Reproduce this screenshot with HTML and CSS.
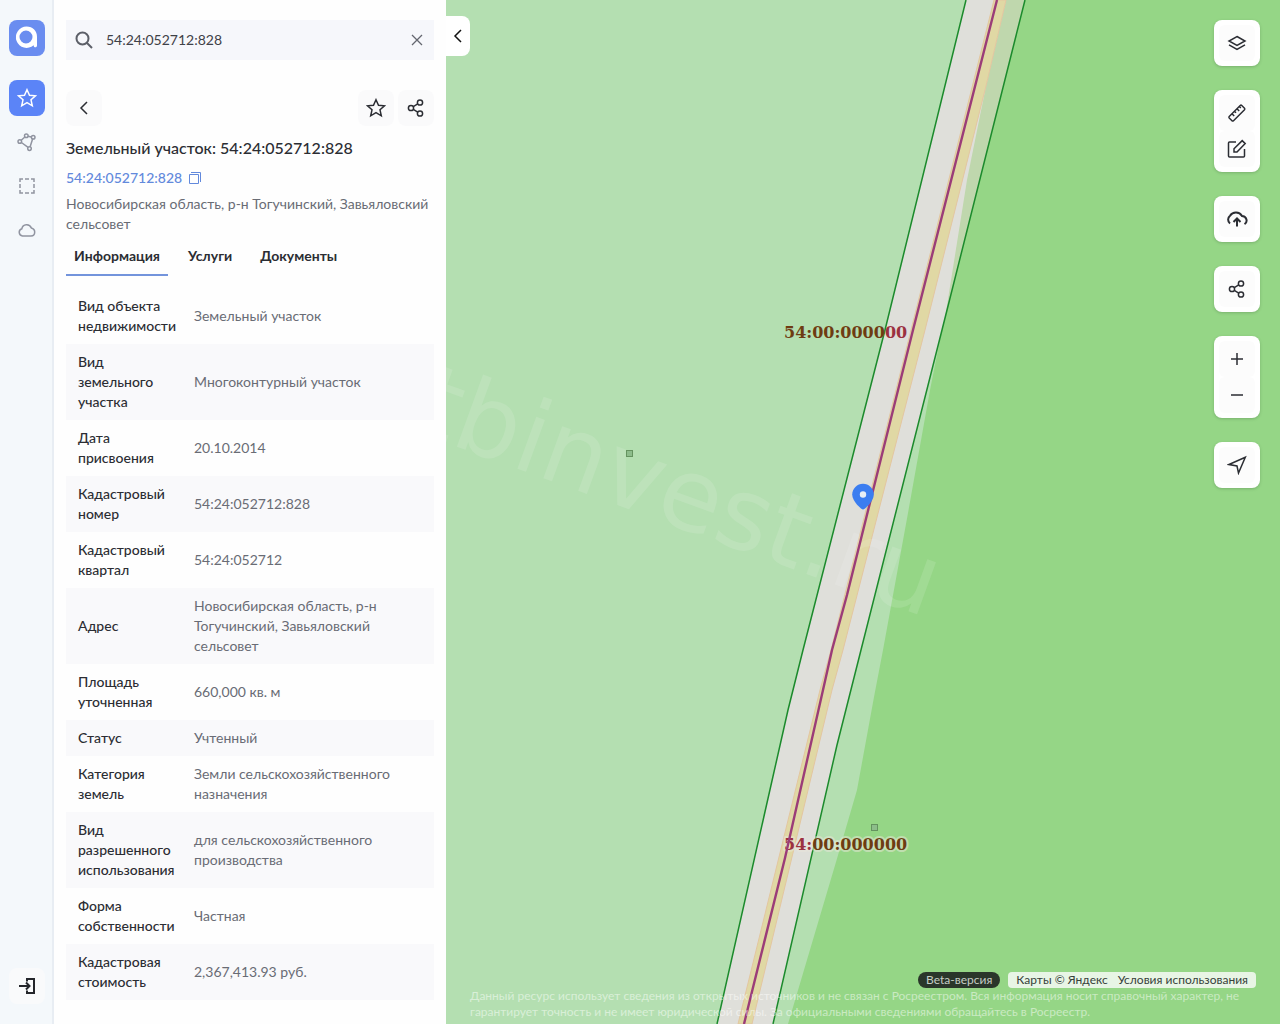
FILE: index.html
```html
<!DOCTYPE html>
<html lang="ru">
<head>
<meta charset="utf-8">
<meta name="viewport" content="width=device-width, initial-scale=1">
<title>Земельный участок: 54:24:052712:828</title>
<link rel="stylesheet" href="styles.css">
</head>
<body>
<svg class="sprite" aria-hidden="true">
  <symbol id="star" viewBox="0 0 20 20"><path d="M10 1.700l2.500 5.500 6 .6-4.500 4 1.300 6-5.300-3.100-5.300 3.100 1.300-6-4.500-4 6-.6z"/></symbol>
  <symbol id="share" viewBox="0 0 20 20"><circle cx="5" cy="10" r="2.600"/><circle cx="14" cy="4.500" r="2.600"/><circle cx="14" cy="15.500" r="2.600"/><path d="M7.300 8.600l4.400-2.700M7.300 11.400l4.400 2.700"/></symbol>
  <symbol id="back" viewBox="0 0 20 20"><path d="M13 4l-6 6 6 6"/></symbol>
</svg>
<div class="app">
  <nav class="rail" aria-label="Разделы">
    <a class="logo" href="#" aria-label="Главная"><svg width="36" height="36" viewBox="0 0 36 36"><path fill="#fff" fill-rule="evenodd" d="M17.500 6.500C24 6.500 28 11 28 16.700V25.500C28 27.500 26 27.600 25 26.700L24.600 25.300A10.700 10.700 0 1 1 17.500 6.500zM17 10.500a6.500 6.500 0 1 0 0 13 6.500 6.500 0 0 0 0-13z"/></svg></a>
    <button class="rail-btn active" aria-label="Избранное"><svg class="ico" width="20" height="20"><use href="#star"/></svg></button>
    <button class="rail-btn" aria-label="Контур"><svg class="ico" width="20" height="20" viewBox="0 0 20 20"><circle cx="2.800" cy="9.500" r="1.800"/><circle cx="9.300" cy="3.800" r="1.800"/><circle cx="16.200" cy="5.300" r="1.800"/><circle cx="12.500" cy="16.600" r="1.800"/><path d="M4.200 8.300L7.900 5M11 4.200l3.400.700M15.600 7l-2.500 7.800M4.400 10.500l6.700 4.900"/></svg></button>
    <button class="rail-btn" aria-label="Область"><svg class="ico" width="20" height="20" viewBox="0 0 20 20"><path d="M3 6V3h3M14 3h3v3M17 14v3h-3M6 17H3v-3M8 3h4M8 17h4M3 8v4M17 8v4"/></svg></button>
    <button class="rail-btn" aria-label="Облако"><svg class="ico" width="20" height="20" viewBox="0 0 20 20"><path d="M5.500 16a3.700 3.700 0 0 1-.7-7.200 5 5 0 0 1 9.500-.9c2.300.6 3.400 2.200 3.400 4.100 0 2.300-1.600 4-3.700 4z"/></svg></button>
    <button class="rail-btn login" aria-label="Войти"><svg class="ico" width="20" height="20" viewBox="0 0 20 20"><path d="M10 5.500V3h7v14h-7v-2.500M2 10h10M9 6.500l3.500 3.500L9 13.500"/></svg></button>
  </nav>

  <main class="panel">
    <form class="search">
      <svg class="ico" width="22" height="22" viewBox="0 0 22 22"><circle cx="8.500" cy="9.500" r="6"/><path d="M13 14l5 5"/></svg>
      <input type="text" aria-label="Поиск" value="54:24:052712:828">
      <button type="reset" aria-label="Очистить"><svg class="ico" width="12" height="12" viewBox="0 0 12 12"><path d="M1 1l10 10M11 1L1 11"/></svg></button>
    </form>
    <div class="actions">
      <button class="soft" aria-label="Назад"><svg class="ico" width="20" height="20"><use href="#back"/></svg></button>
      <span class="actions-right">
        <button class="soft" aria-label="В избранное"><svg class="ico" width="20" height="20"><use href="#star"/></svg></button>
        <button class="soft" aria-label="Поделиться"><svg class="ico" width="20" height="20"><use href="#share"/></svg></button>
      </span>
    </div>
    <h1>Земельный участок: 54:24:052712:828</h1>
    <a class="number" href="#">54:24:052712:828 <svg class="ico" width="14" height="14" viewBox="0 0 14 14"><path d="M1.500 3.500h9v9h-9zM3 1.500h9.500V11"/></svg></a>
    <p class="address">Новосибирская область, р-н Тогучинский, Завьяловский сельсовет</p>
    <div class="tabs" role="tablist">
      <button role="tab" aria-selected="true">Информация</button>
      <button role="tab" aria-selected="false">Услуги</button>
      <button role="tab" aria-selected="false">Документы</button>
    </div>
    <table class="info">
      <tr><th scope="row">Вид объекта недвижимости</th><td>Земельный участок</td></tr>
      <tr><th scope="row">Вид земельного участка</th><td>Многоконтурный участок</td></tr>
      <tr><th scope="row">Дата присвоения</th><td>20.10.2014</td></tr>
      <tr><th scope="row">Кадастровый номер</th><td>54:24:052712:828</td></tr>
      <tr><th scope="row">Кадастровый квартал</th><td>54:24:052712</td></tr>
      <tr><th scope="row">Адрес</th><td>Новосибирская область, р-н Тогучинский, Завьяловский сельсовет</td></tr>
      <tr><th scope="row">Площадь уточненная</th><td>660,000 кв. м</td></tr>
      <tr><th scope="row">Статус</th><td>Учтенный</td></tr>
      <tr><th scope="row">Категория земель</th><td>Земли сельскохозяйственного назначения</td></tr>
      <tr><th scope="row">Вид разрешенного использования</th><td>для сельскохозяйственного производства</td></tr>
      <tr><th scope="row">Форма собственности</th><td>Частная</td></tr>
      <tr><th scope="row">Кадастровая стоимость</th><td>2,367,413.93 руб.</td></tr>
    </table>
  </main>

  <section class="map" aria-label="Карта">
    <svg class="canvas" viewBox="446 0 834 1024" preserveAspectRatio="xMidYMid slice">
      <rect class="meadow" x="-1000" y="-500" width="3500" height="2500"/>
      <path class="forest" d="M1005 0L986 86 967 180 943 325 930 390 908 513 883 650 874 697 857 790 836 862 788 1024H2500V0z"/>
      <path class="parcel" d="M966 0L885 330 803 650 788 710 717 1024H773L837 745 861 650 942 330 1025 0z"/>
      <path class="parcel-shade" d="M1006 0L986 86 967 180 945 318 1025 0z"/>
      <path class="road" d="M994 0L911 330 831 650 820 690 738 1024H752L832 690 843 650 925 330 986 86 1006 0z"/>
      <text class="watermark" transform="translate(411 430) rotate(20)">tbinvest.ru</text>
      <path class="border" d="M966 0L885 330 803 650 788 710 717 1024M1025 0L942 330 861 650 837 745 773 1024"/>
      <rect class="pole" x="626.500" y="450.500" width="6" height="6"/>
      <rect class="pole" x="871.500" y="824.500" width="6" height="6"/>
      <text class="quarter" x="784" y="338">54:00:0000<tspan class="over">00</tspan></text>
      <text class="quarter halo" x="784" y="850"><tspan class="over">54:</tspan>00:000000</text>
      <path class="axis" d="M997 0L913 330 847 595 832 650 823 690 785 858 744 1024"/>
      <path class="pin" fill-rule="evenodd" d="M863 509.500c-1.500 0-10.800-8-10.800-15a10.800 10.800 0 0 1 21.600 0c0 7-9.300 15-10.800 15z"/>
      <circle class="pin-eye" cx="863" cy="494.500" r="3.200"/>
    </svg>
    <button class="collapse" aria-label="Свернуть панель"><svg class="ico" width="20" height="20"><use href="#back"/></svg></button>
    <div class="tools">
      <div class="group"><button aria-label="Слои"><svg class="ico" width="20" height="20" viewBox="0 0 20 20"><path d="M10 3.500l8 4.500-8 4.500L2 8zM2 11.800l8 4.500 8-4.500"/></svg></button></div>
      <div class="group">
        <button aria-label="Линейка"><svg class="ico" width="20" height="20" viewBox="0 0 20 20"><path d="M2.200 13.500L13.200 2.500q.8-.7 1.600 0l2.700 2.700q.7.8 0 1.600L6.500 17.800q-.7.6-1.500 0L2.200 15q-.6-.7 0-1.500zM5 10.800l2.200 2.200M7.500 8.300l1.500 1.500M10 5.800L12.200 8M12.300 3.500l1.500 1.500"/></svg></button>
        <button aria-label="Рисовать"><svg class="ico" width="20" height="20" viewBox="0 0 20 20"><path d="M9 3H2.500q-1 0-1 1v13q0 1 1 1h14q1 0 1-1v-7M7 13V9.800l8.200-8.200 3 3L10 13z"/></svg></button>
      </div>
      <div class="group"><button aria-label="Загрузить"><svg class="ico heavy" width="22" height="20" viewBox="0 0 22 20"><path d="M4 14.500A5 5 0 0 1 4 6.700 7 7 0 0 1 16 7c5 .3 6 6 2.500 8.200M11 17.500V10M7.500 13L11 9.500l3.500 3.500"/></svg></button></div>
      <div class="group"><button aria-label="Поделиться картой"><svg class="ico" width="20" height="20"><use href="#share"/></svg></button></div>
      <div class="group">
        <button aria-label="Приблизить"><svg class="ico" width="20" height="20" viewBox="0 0 20 20"><path d="M10 4v12M4 10h12"/></svg></button>
        <button aria-label="Отдалить"><svg class="ico" width="20" height="20" viewBox="0 0 20 20"><path d="M4 10h12"/></svg></button>
      </div>
      <div class="group"><button aria-label="Моё местоположение"><svg class="ico" width="20" height="20" viewBox="0 0 20 20"><path d="M2 9.500L18.300 2.300 11.500 18 10 11z"/></svg></button></div>
    </div>
    <footer class="legal">
      <div class="credits">
        <span class="beta">Beta-версия</span>
        <span class="terms"><a href="#">Карты © Яндекс</a><a href="#">Условия использования</a></span>
      </div>
      <p>Данный ресурс использует сведения из открытых источников и не связан с Росреестром. Вся информация носит справочный характер, не гарантирует точность и не имеет юридической силы. За официальными сведениями обращайтесь в Росреестр.</p>
    </footer>
  </section>
</div>
</body>
</html>
```
FILE: styles.css
```css
* { box-sizing: border-box; }
body {
  margin: 0;
  font: 14px/20px Lato, Roboto, sans-serif;
  color: #2b2d33;
}
button {
  display: flex;
  align-items: center;
  justify-content: center;
  padding: 0;
  border: 0;
  background: none;
  font: inherit;
  color: inherit;
}
a { color: inherit; text-decoration: none; }
.sprite { display: none; }
.ico { fill: none; stroke: currentColor; stroke-width: 1.5; flex: none; }
.heavy { stroke-width: 2; }

.app { display: flex; height: 100vh; }

.rail {
  flex: none;
  width: 54px;
  display: flex;
  flex-direction: column;
  align-items: center;
  gap: 8px;
  padding: 20px 0 20px 2px;
  background: #f4f8fb;
  border-right: 2px solid #e8edf3;
  color: #9094a0;
}
.logo, .rail-btn { width: 36px; height: 36px; border-radius: 8px; }
.logo { margin-bottom: 16px; background: #6a8df0; }
.logo svg { display: block; }
.active { background: #5b84f7; color: #fff; }
.login { margin-top: auto; background: #f9fafb; color: #24262b; }
.login .ico { stroke-width: 2; }

.panel {
  flex: none;
  width: 392px;
  padding: 20px 12px;
  overflow-y: auto;
  scrollbar-width: none;
  background: #fefefe;
}
.search {
  display: flex;
  align-items: center;
  height: 40px;
  padding: 0 10px 0 8px;
  background: #f6f7fb;
}
.search > .ico { color: #5c5f68; stroke-width: 2; }
.search input {
  flex: 1;
  min-width: 0;
  margin: 0 10px;
  padding: 0;
  border: 0;
  background: none;
  font: inherit;
  color: #3f4147;
}
.search button { width: 14px; height: 20px; color: #64676f; }
.search button .ico { stroke-width: 1.3; }
.actions { display: flex; justify-content: space-between; margin-top: 30px; }
.actions-right { display: flex; gap: 4px; }
.soft { width: 36px; height: 36px; border-radius: 8px; background: #fafafb; }
h1 { margin: 12px 0 10px; font-size: 16px; line-height: 20px; font-weight: 500; }
.number {
  display: flex;
  align-items: center;
  gap: 6px;
  font-weight: 500;
  color: #6289dc;
}
.number .ico { stroke-width: 1; }
.address { margin: 6px 0 0; color: #696c75; }
.tabs { display: flex; gap: 12px; }
.tabs button {
  padding: 12px 8px 8px;
  height: 42px;
  font-weight: 700;
  border-bottom: 2px solid transparent;
}
.tabs [aria-selected="true"] { border-color: #7394dc; }

.info { width: 100%; margin-top: 12px; border-collapse: collapse; table-layout: fixed; }
.info th, .info td { padding: 8px 12px; text-align: left; vertical-align: middle; }
.info th { width: 116px; padding-right: 4px; font-weight: 500; }
.info td { color: #696c75; font-weight: 400; }
.info tr:nth-child(even) { background: #f9f9fb; }

.map { position: relative; flex: 1; min-width: 0; overflow: hidden; background: #95d686; }
.canvas { display: block; width: 100%; height: 100%; }
.meadow { fill: #b4dfb1; }
.forest { fill: #95d686; }
.parcel { fill: #dfdfda; }
.parcel-shade { fill: #bfd7ad; }
.road { fill: #e0d8a4; stroke: #e3c6a0; }
.border { fill: none; stroke: #1b8a2c; stroke-width: 1.5; }
.axis { fill: none; stroke: #9b3c78; stroke-width: 2.4; }
.pole { fill: #8dbd8b; stroke: #64935f; }
.pin { fill: #3b7df0; }
.pin-eye { fill: #e8eef5; }
.watermark { font: 101px "DejaVu Sans", sans-serif; fill: #fff; fill-opacity: .12; }
.quarter { font: bold 16px "DejaVu Serif", serif; fill: #6e3c12; }
.halo { stroke: #e9e6da; stroke-opacity: .5; stroke-width: 4; paint-order: stroke; stroke-linejoin: round; }
.over { fill: #9c3140; }

.collapse {
  position: absolute;
  left: 0;
  top: 16px;
  width: 24px;
  height: 40px;
  border-radius: 0 8px 8px 0;
  background: #fff;
  color: #111;
}
.tools {
  position: absolute;
  right: 20px;
  top: 20px;
  display: flex;
  flex-direction: column;
  gap: 24px;
}
.group {
  padding: 5px;
  border-radius: 8px;
  background: #fff;
  box-shadow: 0 1px 3px rgba(40, 70, 40, .25);
}
.group button { width: 36px; height: 36px; border-radius: 6px; background: #fcfcfc; }
.legal {
  position: absolute;
  left: 24px;
  right: 24px;
  bottom: 4px;
  font-size: 12px;
  line-height: 16px;
}
.legal p { margin: 0; color: rgba(255, 255, 255, .5); }
.credits { display: flex; justify-content: flex-end; gap: 8px; }
.beta { padding: 0 8px; border-radius: 8px; background: #2a362a; color: #c5cdc5; }
.terms { display: flex; gap: 10px; padding: 0 8px; border-radius: 4px; background: #e8f5e5; color: #36413a; }
```
